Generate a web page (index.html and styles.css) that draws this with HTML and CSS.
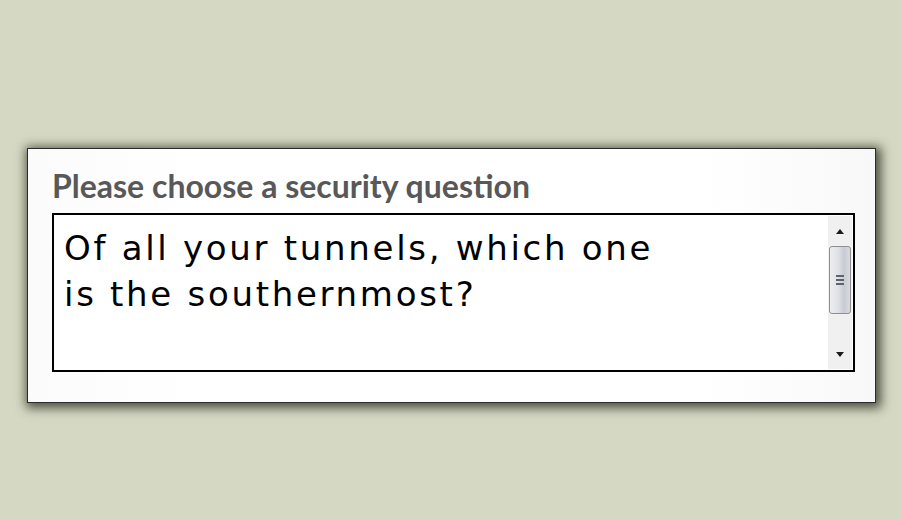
FILE: index.html
```html
<!DOCTYPE html>
<html lang="en">
<head>
    <meta charset="UTF-8">
    <meta name="viewport" content="width=device-width, initial-scale=1.0">
    <title>Security Question</title>
    <link rel="stylesheet" href="styles.css">
</head>
<body>

<div class="card">
    <div class="label">Please choose a security question</div>
    <div class="question-box">
        <div class="question-text">Of all your tunnels, which one<br>is the southernmost?</div>
        <div class="scrollbar">
            <div class="arrow arrow-up"></div>
            <div class="track">
                <div class="thumb">
                    <span class="grip"></span>
                    <span class="grip"></span>
                    <span class="grip"></span>
                </div>
            </div>
            <div class="arrow arrow-down"></div>
        </div>
    </div>
</div>

</body>
</html>
```

FILE: styles.css
```css
body {
    margin: 0;
    height: 100vh;
    background-color: #d5d9c3;
    overflow: hidden;
}

.card {
    margin: 148px 0 0 27px;
    width: 823px;
    height: 235px;
    padding: 18px 0 0 24px;
    background: linear-gradient(to right, #fbfbfb, #ffffff 20%, #ffffff 80%, #f8f8f8);
    border: 1px solid #2b2b2b;
    box-shadow: 2px 2px 10px 3px rgba(30, 32, 20, 0.75);
}

.label {
    font-family: Lato, "Liberation Sans", sans-serif;
    font-weight: bold;
    font-size: 32px;
    line-height: 38px;
    color: #585858;
    margin-bottom: 8px;
}

.question-box {
    display: flex;
    width: 799px;
    height: 155px;
    border: 2px solid #000;
    background-color: #fff;
}

.question-text {
    flex: 1;
    padding: 10px 0 0 10px;
    font-family: "DejaVu Sans", Verdana, sans-serif;
    font-size: 34px;
    letter-spacing: 2.7px;
    line-height: 46px;
    color: #000;
}

.scrollbar {
    width: 24px;
    margin: 1px 1px 1px 0;
    display: flex;
    flex-direction: column;
    background-color: #f0f0f0;
}

.arrow {
    height: 30px;
    display: flex;
    justify-content: center;
    align-items: center;
}

.arrow::before {
    content: "";
    border-left: 4px solid transparent;
    border-right: 4px solid transparent;
}

.arrow-up::before {
    border-bottom: 5px solid #1c1c1c;
}

.arrow-down::before {
    border-top: 5px solid #1c1c1c;
}

.track {
    flex: 1;
    padding: 0 1px;
}

.thumb {
    height: 66px;
    border: 1px solid #8f8f8f;
    border-radius: 3px;
    background: linear-gradient(to right, #eceef0, #dfe1e6 40%, #c9cbd4 70%, #d8dade);
    display: flex;
    flex-direction: column;
    justify-content: center;
    align-items: center;
    gap: 2px;
}

.grip {
    width: 8px;
    height: 2px;
    background-color: #5d6270;
}
```
